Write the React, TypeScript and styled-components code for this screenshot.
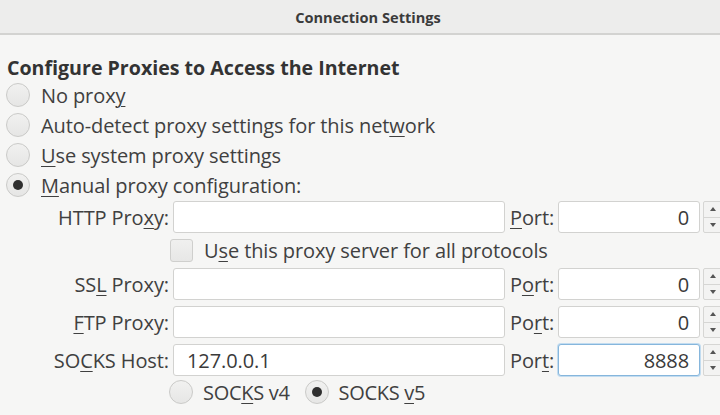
import React from "react";
import styled, { createGlobalStyle } from "styled-components";

const GlobalStyle = createGlobalStyle`
  html, body {
    margin: 0;
    padding: 0;
    background: #f6f6f5;
    overflow: hidden;
  }
  body {
    font-family: "Open Sans", "DejaVu Sans", sans-serif;
    color: #404040;
  }
`;

const Dialog = styled.div`
  width: 736px;
  height: 415px;
  background: #f6f6f5;
`;

const TitleBar = styled.div`
  height: 33px;
  background: #ededec;
  border-bottom: 2px solid #d3d3d1;
  display: flex;
  align-items: center;
  justify-content: center;
  font-size: 14.6px;
  font-weight: 700;
  color: #3b3b3b;
`;

const Body = styled.div`
  padding: 21px 0 0 6px;
`;

const Heading = styled.div`
  font-size: 19.6px;
  font-weight: 700;
  line-height: 24px;
  color: #333333;
  padding-left: 1px;
`;

const RadioRow = styled.label`
  display: flex;
  align-items: center;
  height: 30px;
  gap: 11px;
  font-size: 20px;
  letter-spacing: -0.1px;
`;

const RadioCircle = styled.span<{ $checked?: boolean }>`
  width: 24px;
  height: 24px;
  border-radius: 50%;
  box-sizing: border-box;
  border: 1px solid #cacac8;
  background: linear-gradient(#f1f1f0, #e6e6e5);
  display: flex;
  align-items: center;
  justify-content: center;
  flex-shrink: 0;
  &::after {
    content: "";
    display: ${(p) => (p.$checked ? "block" : "none")};
    width: 10px;
    height: 10px;
    border-radius: 50%;
    background: #2f2f2f;
  }
`;

const Mn = styled.span`
  text-decoration: underline;
  text-underline-offset: 3px;
  text-decoration-thickness: 1px;
`;

const ProxyGrid = styled.div`
  display: grid;
  grid-template-columns: 170px 332px 47px 142px 20px;
  column-gap: 3px;
  row-gap: 6px;
  margin-top: 1px;
  margin-left: -6px;
  align-items: center;
  font-size: 20px;
  letter-spacing: -0.1px;
`;

const FieldLabel = styled.div`
  text-align: right;
  padding-right: 1px;
  white-space: nowrap;
`;

const PortLabel = styled.div`
  padding-left: 2px;
  white-space: nowrap;
`;

const TextBox = styled.div<{ $focused?: boolean; $right?: boolean }>`
  height: 32px;
  box-sizing: border-box;
  background: #ffffff;
  border: 1px solid ${(p) => (p.$focused ? "#86b6dc" : "#d2d2d0")};
  box-shadow: ${(p) => (p.$focused ? "0 0 0 1px #c2dcf0" : "none")};
  border-radius: 3px;
  display: flex;
  align-items: center;
  justify-content: ${(p) => (p.$right ? "flex-end" : "flex-start")};
  padding: 0 10px 0 13px;
  font-size: 20px;
  color: #3a3a3a;
`;

const Spinner = styled.div`
  height: 32px;
  display: flex;
  flex-direction: column;
  box-sizing: border-box;
  border: 1px solid #d6d6d4;
  border-radius: 2px;
  background: #f3f3f2;
`;

const SpinHalf = styled.div<{ $top?: boolean }>`
  flex: 1;
  display: flex;
  align-items: center;
  justify-content: center;
  border-bottom: ${(p) => (p.$top ? "1px solid #d6d6d4" : "none")};
`;

const CheckRow = styled.div`
  grid-column: 2 / span 4;
  display: flex;
  align-items: center;
  gap: 11px;
  height: 23px;
  margin-left: -3px;
`;

const CheckBox = styled.span`
  width: 23px;
  height: 23px;
  box-sizing: border-box;
  border: 1px solid #cfcfcd;
  border-radius: 3px;
  background: linear-gradient(#f0f0ef, #e7e7e6);
`;

const VersionRow = styled.div`
  grid-column: 2 / span 4;
  display: flex;
  align-items: center;
  gap: 15px;
  height: 24px;
  margin-left: -4px;
  margin-top: -2px;
`;

const VersionOption = styled.label`
  display: flex;
  align-items: center;
  gap: 10px;
  letter-spacing: -0.3px;
`;

const Arrow = ({ up }: { up?: boolean }) => (
  <svg width="6" height="4" viewBox="0 0 6 4">
    <path d={up ? "M0 4 L3 0 L6 4 Z" : "M0 0 L3 4 L6 0 Z"} fill="#555" />
  </svg>
);

const SpinButton = () => (
  <Spinner>
    <SpinHalf $top>
      <Arrow up />
    </SpinHalf>
    <SpinHalf>
      <Arrow />
    </SpinHalf>
  </Spinner>
);

type ProxyRowProps = {
  label: React.ReactNode;
  value?: string;
  port: React.ReactNode;
  portValue: string;
  focused?: boolean;
};

const ProxyRow = ({ label, value, port, portValue, focused }: ProxyRowProps) => (
  <>
    <FieldLabel>{label}</FieldLabel>
    <TextBox>{value}</TextBox>
    <PortLabel>{port}</PortLabel>
    <TextBox $right $focused={focused}>
      {portValue}
    </TextBox>
    <SpinButton />
  </>
);

export default function App() {
  return (
    <>
      <GlobalStyle />
      <Dialog>
        <TitleBar>Connection Settings</TitleBar>
        <Body>
          <Heading>Configure Proxies to Access the Internet</Heading>
          <RadioRow>
            <RadioCircle />
            <span>
              No prox<Mn>y</Mn>
            </span>
          </RadioRow>
          <RadioRow>
            <RadioCircle />
            <span>
              Auto-detect proxy settings for this net<Mn>w</Mn>ork
            </span>
          </RadioRow>
          <RadioRow>
            <RadioCircle />
            <span>
              <Mn>U</Mn>se system proxy settings
            </span>
          </RadioRow>
          <RadioRow>
            <RadioCircle $checked />
            <span>
              <Mn>M</Mn>anual proxy configuration:
            </span>
          </RadioRow>
          <ProxyGrid>
            <ProxyRow
              label={
                <>
                  HTTP Pro<Mn>x</Mn>y:
                </>
              }
              port={
                <>
                  <Mn>P</Mn>ort:
                </>
              }
              portValue="0"
            />
            <CheckRow>
              <CheckBox />
              <span>
                U<Mn>s</Mn>e this proxy server for all protocols
              </span>
            </CheckRow>
            <ProxyRow
              label={
                <>
                  SS<Mn>L</Mn> Proxy:
                </>
              }
              port={
                <>
                  P<Mn>o</Mn>rt:
                </>
              }
              portValue="0"
            />
            <ProxyRow
              label={
                <>
                  <Mn>F</Mn>TP Proxy:
                </>
              }
              port={
                <>
                  Po<Mn>r</Mn>t:
                </>
              }
              portValue="0"
            />
            <ProxyRow
              label={
                <>
                  SO<Mn>C</Mn>KS Host:
                </>
              }
              value="127.0.0.1"
              port={
                <>
                  Por<Mn>t</Mn>:
                </>
              }
              portValue="8888"
              focused
            />
            <VersionRow>
              <VersionOption>
                <RadioCircle />
                <span>
                  SOC<Mn>K</Mn>S v4
                </span>
              </VersionOption>
              <VersionOption>
                <RadioCircle $checked />
                <span>
                  SOCKS <Mn>v</Mn>5
                </span>
              </VersionOption>
            </VersionRow>
          </ProxyGrid>
        </Body>
      </Dialog>
    </>
  );
}
